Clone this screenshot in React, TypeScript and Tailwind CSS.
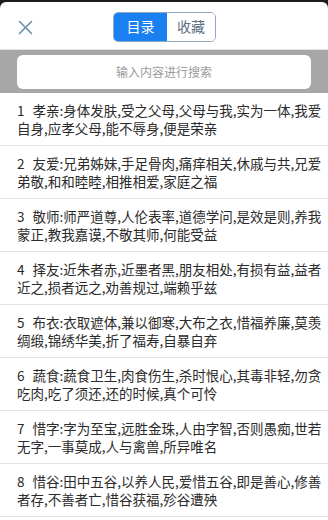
import React, { useState } from "react";

const items: string[] = [
  "孝亲:身体发肤,受之父母,父母与我,实为一体,我爱自身,应孝父母,能不辱身,便是荣亲",
  "友爱:兄弟姊妹,手足骨肉,痛痒相关,休戚与共,兄爱弟敬,和和睦睦,相推相爱,家庭之福",
  "敬师:师严道尊,人伦表率,道德学问,是效是则,养我蒙正,教我嘉谟,不敬其师,何能受益",
  "择友:近朱者赤,近墨者黑,朋友相处,有损有益,益者近之,损者远之,劝善规过,端赖乎兹",
  "布衣:衣取遮体,兼以御寒,大布之衣,惜福养廉,莫羡绸缎,锦绣华美,折了福寿,自暴自弃",
  "蔬食:蔬食卫生,肉食伤生,杀时恨心,其毒非轻,勿贪吃肉,吃了须还,还的时候,真个可怜",
  "惜字:字为至宝,远胜金珠,人由字智,否则愚痴,世若无字,一事莫成,人与禽兽,所异唯名",
  "惜谷:田中五谷,以养人民,爱惜五谷,即是善心,修善者存,不善者亡,惜谷获福,殄谷遭殃",
];

const App: React.FC = () => {
  const [tab, setTab] = useState<"list" | "fav">("list");

  return (
    <div
      className="w-[328px] h-[520px] overflow-hidden bg-[#1e1e1e] pt-[2px]"
      style={{ fontFamily: '"Noto Sans CJK SC", "Noto Sans", sans-serif' }}
    >
      <div className="h-full bg-white rounded-t-[6px] flex flex-col">
        {/* header */}
        <div className="h-[48px] flex items-center relative border-b border-[#e2e2e2]">
          <button className="absolute left-[17px] top-[17px] w-[16px] h-[16px] flex items-center justify-center">
            <svg width="15" height="15" viewBox="0 0 15 15">
              <path
                d="M1.5 1.5 L13.5 13.5 M13.5 1.5 L1.5 13.5"
                stroke="#6690ad"
                strokeWidth="1.6"
                strokeLinecap="round"
                fill="none"
              />
            </svg>
          </button>
          <div className="ml-[113px] mt-[2px] flex h-[30px] rounded-[5px] border border-[#8fa9c2] overflow-hidden text-[14px]">
            <button
              onClick={() => setTab("list")}
              className={
                tab === "list"
                  ? "w-[53px] bg-[#1a7ff0] text-white"
                  : "w-[53px] bg-white text-[#5d6f80]"
              }
            >
              目录
            </button>
            <button
              onClick={() => setTab("fav")}
              className={
                tab === "fav"
                  ? "w-[48px] bg-[#1a7ff0] text-white"
                  : "w-[48px] bg-white text-[#5d6f80]"
              }
            >
              收藏
            </button>
          </div>
        </div>

        {/* search */}
        <div className="bg-[#a7a7a7] px-[17px] pt-[5px] pb-[4px]">
          <div className="h-[34px] bg-white rounded-[6px] flex items-center justify-center text-[12px] text-[#9a9a9a]">
            输入内容进行搜索
          </div>
        </div>

        {/* list */}
        <div className="flex-1">
          {items.map((text, i) => (
            <div
              key={i}
              className="h-[53px] border-b border-[#e4e4e4] pl-[17px] pr-[5px] pt-[8px] text-[13.5px] leading-[18px] text-[#2b2b2b]"
            >
              <span className="mr-[8px]">{i + 1}</span>
              {text}
            </div>
          ))}
        </div>
      </div>
    </div>
  );
};

export default App;
